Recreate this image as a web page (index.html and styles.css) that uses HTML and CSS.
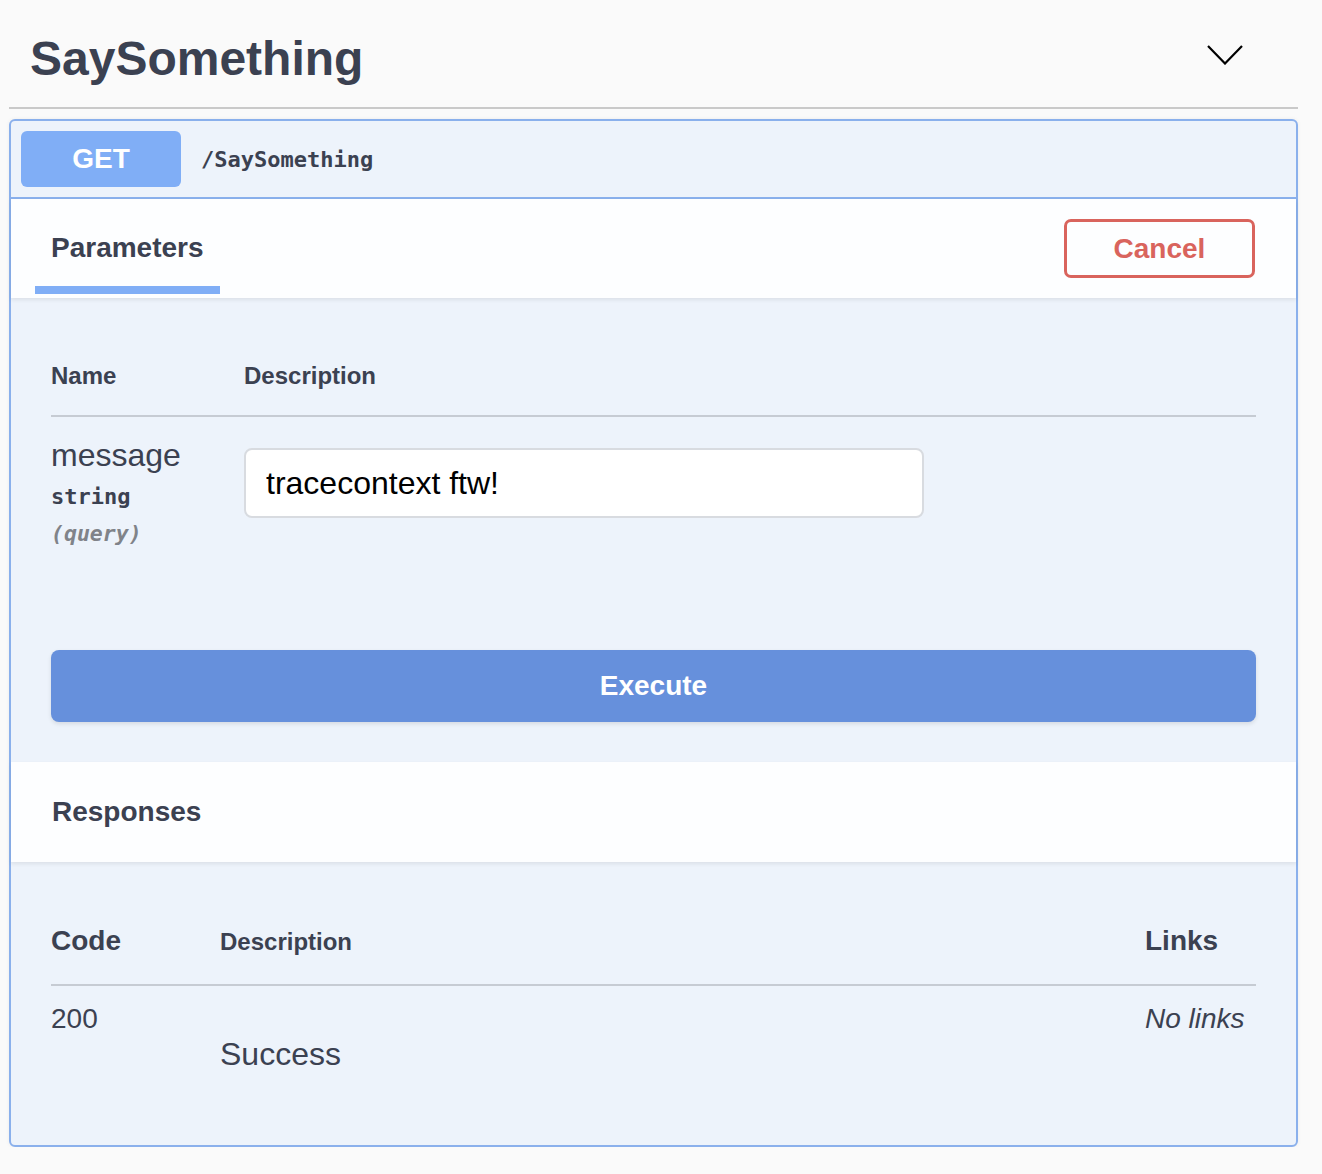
FILE: index.html
```html
<!DOCTYPE html>
<html lang="en">
<head>
<meta charset="utf-8">
<title>SaySomething</title>
<link rel="stylesheet" href="styles.css">
</head>
<body>
<div class="page">
  <div class="tag">
    <h3 class="tag-title">SaySomething</h3>
    <svg class="chevron" width="36" height="20" viewBox="0 0 36 20" aria-hidden="true"><polyline points="1,1 18,18.5 35,1" fill="none" stroke="#000" stroke-width="2.2"/></svg>
  </div>
  <div class="opblock">
    <div class="summary">
      <span class="method">GET</span>
      <span class="path">/SaySomething</span>
    </div>
    <div class="section-header">
      <div class="tab"><h4 class="tab-title">Parameters</h4></div>
      <button class="cancel">Cancel</button>
    </div>
    <div class="params">
      <div class="params-head">
        <div class="col-name">Name</div>
        <div class="col-desc">Description</div>
      </div>
      <div class="params-row">
        <div class="col-name">
          <div class="param-name">message</div>
          <div class="param-type">string</div>
          <div class="param-in">(query)</div>
        </div>
        <div class="col-desc">
          <input class="param-input" type="text" value="tracecontext ftw!">
        </div>
      </div>
      <button class="execute">Execute</button>
    </div>
    <div class="section-header resp-header">
      <h4 class="resp-title">Responses</h4>
    </div>
    <div class="responses">
      <div class="resp-head">
        <div class="rcol-code">Code</div>
        <div class="rcol-desc small">Description</div>
        <div class="rcol-links">Links</div>
      </div>
      <div class="resp-row">
        <div class="rcol-code">200</div>
        <div class="rcol-desc"><p class="resp-desc">Success</p></div>
        <div class="rcol-links"><i>No links</i></div>
      </div>
    </div>
  </div>
</div>
</body>
</html>
```

FILE: styles.css
```css
html, body {
  margin: 0;
  padding: 0;
}
body {
  background: #fafafa;
  font-family: "Liberation Sans", Arial, sans-serif;
  color: #3b4151;
}
.page {
  margin-left: 9px;
  width: 1289px;
}
.tag {
  box-sizing: border-box;
  height: 109px;
  padding: 10px 55px 0 21px;
  display: flex;
  align-items: center;
  border-bottom: 2px solid #c9c9c9;
}
.tag-title {
  margin: 0;
  font-size: 48px;
  line-height: 56px;
  font-weight: bold;
  color: #3b4151;
  flex: 1;
}
.chevron {
  display: block;
  margin-bottom: 8px;
}
.opblock {
  margin-top: 10px;
  border: 2px solid #8ab0ec;
  border-radius: 6px;
  background: #edf3fb;
  box-shadow: 0 0 4px rgba(0, 0, 0, 0.06);
}
.summary {
  display: flex;
  align-items: center;
  padding: 10px;
  border-bottom: 2px solid #8ab0ec;
}
.method {
  width: 160px;
  height: 56px;
  border-radius: 6px;
  background: #80aef6;
  color: #fff;
  font-size: 28px;
  font-weight: bold;
  display: flex;
  align-items: center;
  justify-content: center;
}
.path {
  margin-left: 20px;
  font-family: "DejaVu Sans Mono", "Liberation Mono", monospace;
  font-size: 22px;
  font-weight: bold;
  color: #3b4151;
}
.section-header {
  position: relative;
  box-sizing: border-box;
  height: 99px;
  background: #fdfeff;
  box-shadow: 0 2px 4px rgba(0, 0, 0, 0.08);
  display: flex;
  align-items: center;
  padding: 0 41px 0 24px;
}
.tab {
  align-self: flex-end;
  margin-bottom: 4px;
  padding: 0 16px 18px;
  border-bottom: 8px solid #80aef6;
}
.tab-title {
  margin: 0;
  font-size: 28px;
  line-height: 40px;
  font-weight: bold;
  color: #3b4151;
}
.cancel {
  margin-left: auto;
  box-sizing: border-box;
  width: 191px;
  height: 59px;
  border: 3px solid #d9645d;
  border-radius: 7px;
  background: transparent;
  color: #d9645d;
  font-family: "Liberation Sans", Arial, sans-serif;
  font-size: 28px;
  font-weight: bold;
  padding: 0;
}
.params {
  padding: 63px 40px 40px 40px;
}
.params-head {
  display: flex;
  padding-bottom: 24px;
  border-bottom: 2px solid #c6cbd3;
  font-size: 24px;
  line-height: 30px;
  font-weight: bold;
}
.col-name {
  width: 193px;
  flex: none;
}
.col-desc {
  flex: 1;
}
.params-row {
  display: flex;
  padding: 20px 0;
}
.param-name {
  font-size: 32px;
  line-height: 36px;
}
.param-type {
  margin-top: 9px;
  font-family: "DejaVu Sans Mono", "Liberation Mono", monospace;
  font-size: 22px;
  line-height: 30px;
  font-weight: bold;
}
.param-in {
  margin-top: 7px;
  font-family: "DejaVu Sans Mono", "Liberation Mono", monospace;
  font-size: 21.5px;
  line-height: 30px;
  font-style: italic;
  font-weight: bold;
  color: #808389;
}
.params-row .col-desc {
  padding-top: 11px;
}
.param-input {
  display: block;
  box-sizing: border-box;
  width: 680px;
  height: 70px;
  margin: 0;
  padding: 0 20px;
  border: 2px solid #d8dbe0;
  border-radius: 8px;
  background: #fff;
  font-family: "Liberation Sans", Arial, sans-serif;
  font-size: 32px;
  color: #000;
}
.execute {
  display: block;
  width: 100%;
  height: 72px;
  margin-top: 81px;
  border: none;
  border-radius: 8px;
  background: #6690dc;
  color: #fff;
  font-family: "Liberation Sans", Arial, sans-serif;
  font-size: 28px;
  font-weight: bold;
  box-shadow: 0 2px 4px rgba(0, 0, 0, 0.1);
}
.resp-header {
  height: 100px;
  padding-left: 41px;
}
.resp-title {
  margin: 0;
  font-size: 28px;
  line-height: 40px;
  font-weight: bold;
}
.responses {
  padding: 59px 40px 71px 40px;
}
.resp-head {
  display: flex;
  align-items: baseline;
  padding-bottom: 22px;
  border-bottom: 2px solid #c6cbd3;
  font-size: 28px;
  line-height: 40px;
  font-weight: bold;
}
.rcol-code {
  width: 169px;
  flex: none;
}
.rcol-desc {
  flex: 1;
}
.rcol-desc.small {
  font-size: 24px;
}
.rcol-links {
  width: 111px;
  flex: none;
}
.resp-row {
  display: flex;
  padding-top: 13px;
  font-size: 28px;
  line-height: 40px;
}
.resp-desc {
  margin: 35px 0 0;
  font-size: 32px;
  line-height: 40px;
}
```
